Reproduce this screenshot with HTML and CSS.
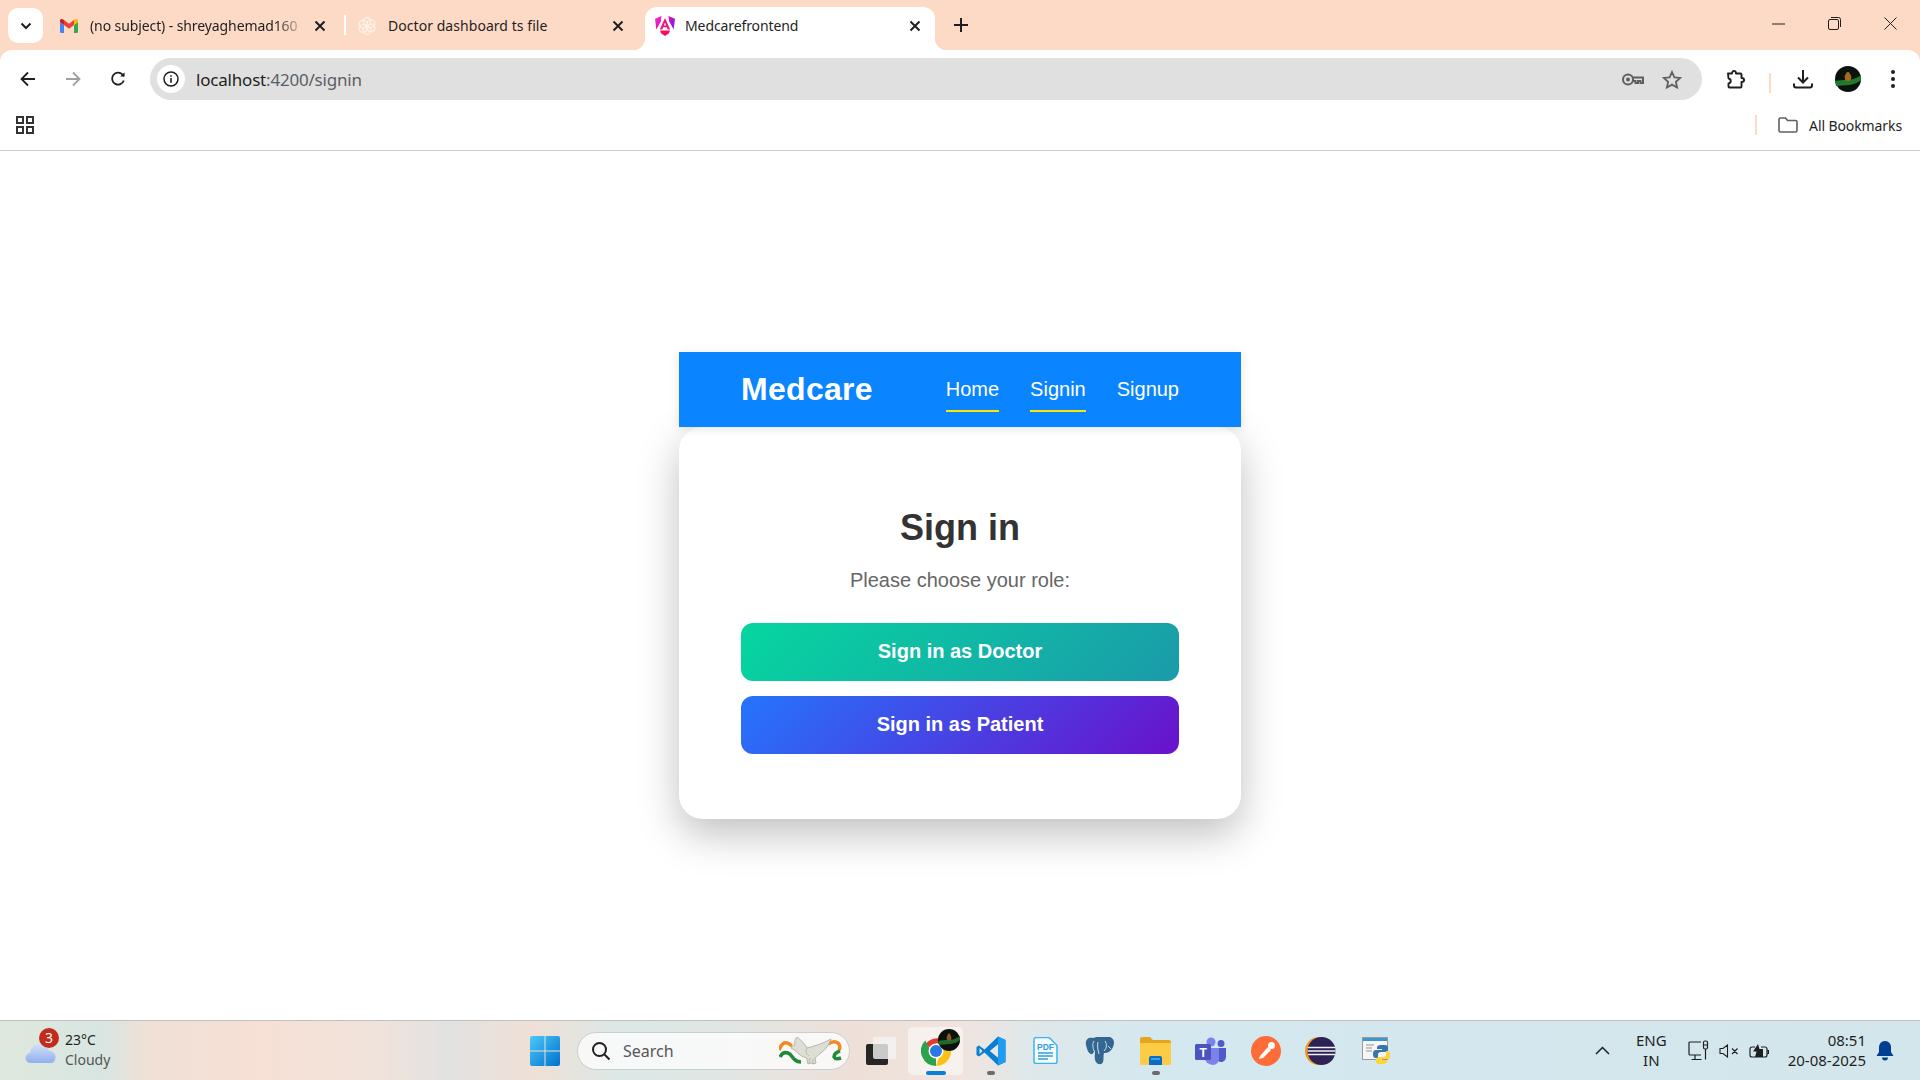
FILE: index.html
```html
<!doctype html>
<html lang="en">
<head>
    <meta charset="UTF-8">
    <title>Medcarefrontend</title>
    <link rel="stylesheet" href="styles.css">
</head>
<body>
    <div class="tabstrip">
        <div class="tabsearch">
            <svg width="12" height="8" viewBox="0 0 12 8"><path d="M1.500 1.500 6 6l4.500-4.500" fill="none" stroke="#1f1f1f" stroke-width="2"/></svg>
        </div>
        <div class="tab tab-first">
            <svg class="favicon" width="18" height="14" viewBox="0 0 18 14">
                <path d="M0 3v9.500A1.500 1.500 0 0 0 1.500 14H4V6z" fill="#4285f4"/>
                <path d="M14 6v8h2.500a1.500 1.500 0 0 0 1.500-1.500V3z" fill="#34a853"/>
                <path d="M0 3 4 6V1L2.600.3A1.700 1.700 0 0 0 0 2z" fill="#c5221f"/>
                <path d="M4 1v5l5 3.800L14 6V1L9 4.800z" fill="#ea4335"/>
                <path d="M14 1v5l4-3V2A1.700 1.700 0 0 0 15.400.3z" fill="#fbbc04"/>
            </svg>
            <span class="tab-title tab-title-fade">(no subject) - shreyaghemad160</span>
            <svg class="tab-close" width="12" height="12" viewBox="0 0 12 12"><path d="m1.500 1.500 9 9m0-9-9 9" stroke="#1f1f1f" stroke-width="2"/></svg>
        </div>
        <div class="tab-sep"></div>
        <div class="tab tab-second">
            <svg class="favicon" width="18" height="18" viewBox="0 0 18 18" fill="none" stroke="#fdf1e9" stroke-width="1.300">
                <circle cx="9" cy="4.500" r="3.800"/>
                <circle cx="5" cy="7" r="3.800"/>
                <circle cx="5" cy="11.500" r="3.800"/>
                <circle cx="9" cy="13.500" r="3.800"/>
                <circle cx="13" cy="11" r="3.800"/>
                <circle cx="13" cy="6.500" r="3.800"/>
            </svg>
            <span class="tab-title">Doctor dashboard ts file</span>
            <svg class="tab-close" width="12" height="12" viewBox="0 0 12 12"><path d="m1.500 1.500 9 9m0-9-9 9" stroke="#1f1f1f" stroke-width="2"/></svg>
        </div>
        <div class="tab tab-active">
            <svg class="favicon" width="20" height="20" viewBox="0 0 20 20">
                <defs><linearGradient id="ng" x1="0" y1="0" x2="1" y2="0.600"><stop offset="0" stop-color="#f637e3"/><stop offset="0.500" stop-color="#e40dab"/><stop offset="1" stop-color="#8a1bf2"/></linearGradient></defs>
                <path d="M6.500 0 0 2.800 1.300 13.500 5.800 5.500zM13.500 0 20 2.800 18.700 13.500 14.200 5.500z" fill="url(#ng)"/>
                <path d="M10 2 4.800 13.500h2.400l.9-2.200h3.800l.9 2.200h2.400zM10 6.500l1.100 3H8.900z" fill="#f0127e"/>
                <path d="M5 14.500h10l-1 2.800L10 20l-4-2.700z" fill="#fa0f55"/>
            </svg>
            <span class="tab-title">Medcarefrontend</span>
            <svg class="tab-close" width="12" height="12" viewBox="0 0 12 12"><path d="m1.500 1.500 9 9m0-9-9 9" stroke="#1f1f1f" stroke-width="2"/></svg>
        </div>
        <svg class="newtab" width="14" height="14" viewBox="0 0 14 14"><path d="M7 0v14M0 7h14" stroke="#1f1f1f" stroke-width="2"/></svg>
        <div class="winctl">
            <svg width="13" height="2" viewBox="0 0 13 2"><path d="M0 1h13" stroke="#1f1f1f"/></svg>
            <svg width="13" height="13" viewBox="0 0 13 13" fill="none" stroke="#1f1f1f"><rect x=".5" y="2.500" width="10" height="10" rx="1.500"/><path d="M3 .5h7.500a2 2 0 0 1 2 2V10"/></svg>
            <svg width="13" height="13" viewBox="0 0 13 13"><path d="m.5.5 12 12m0-12-12 12" stroke="#1f1f1f"/></svg>
        </div>
    </div>

    <div class="toolbar">
        <div class="toolbtn">
            <svg width="16" height="16" viewBox="0 0 16 16" fill="none" stroke="#1f1f1f" stroke-width="1.800"><path d="M15 8H2M8 1.500 1.500 8 8 14.500"/></svg>
        </div>
        <div class="toolbtn toolbtn-next">
            <svg width="16" height="16" viewBox="0 0 16 16" fill="none" stroke="#a0a0a0" stroke-width="1.800"><path d="M1 8h13M8 1.500 14.500 8 8 14.500"/></svg>
        </div>
        <div class="toolbtn toolbtn-next">
            <svg width="16" height="16" viewBox="0 0 16 16" fill="none" stroke="#1f1f1f" stroke-width="1.800"><path d="M13.800 9.500A6 6 0 1 1 12.500 3.500L14 5"/><path d="M14.500 1.200V5.500h-4.300z" fill="#1f1f1f" stroke="none"/></svg>
        </div>
        <div class="omnibox">
            <div class="siteinfo">
                <svg width="16" height="16" viewBox="0 0 16 16"><circle cx="8" cy="8" r="7" fill="none" stroke="#1f1f1f" stroke-width="1.500"/><path d="M7.200 7h1.600v4.700H7.200zM7.200 4.200h1.600v1.600H7.200z" fill="#1f1f1f"/></svg>
            </div>
            <span class="url">localhost<span class="url-dim">:4200/signin</span></span>
            <svg class="omni-key" width="22" height="13" viewBox="0 0 22 13" fill="none" stroke="#5f5f5f" stroke-width="2"><circle cx="6" cy="6.500" r="5"/><circle cx="6" cy="6.500" r="1" fill="#5f5f5f"/><path d="M11 4.500h10V10h-2.500V8H16v2h-2.500V8H11"/></svg>
            <svg class="omni-star" width="20" height="19" viewBox="0 0 20 19" fill="none" stroke="#5f5f5f" stroke-width="1.800"><path d="m10 2 2.400 5.300 5.800.6-4.300 3.900 1.200 5.700-5.100-2.900-5.100 2.900 1.200-5.700-4.300-3.900 5.800-.6z"/></svg>
        </div>
        <div class="toolbtn toolbtn-ext">
            <svg width="20" height="20" viewBox="0 0 20 20" fill="none" stroke="#1f1f1f" stroke-width="1.900"><path d="M2 4.500h4c0-3.500 4-3.500 4 0h4.500a1 1 0 0 1 1 1V9c3.500 0 3.500 4 0 4v4.500a1 1 0 0 1-1 1H3.500a1 1 0 0 1-1-1v-3c3-.5 3-4.500 0-5z" stroke-linejoin="round"/></svg>
        </div>
        <div class="tool-sep"></div>
        <div class="toolbtn">
            <svg width="20" height="20" viewBox="0 0 20 20" fill="none" stroke="#1f1f1f" stroke-width="2"><path d="M10 1v12M5 8.500l5 5 5-5"/><path d="M1 14.500v2a2 2 0 0 0 2 2h14a2 2 0 0 0 2-2v-2"/></svg>
        </div>
        <div class="toolbtn toolbtn-tight">
            <svg width="26" height="26" viewBox="0 0 26 26">
                <circle cx="13" cy="13" r="13" fill="#0b120c"/>
                <path d="M0 15c7-2 18 1 26-6v5c-6 6-17 5-25 6z" fill="#1f7a2e"/>
                <path d="M10 13c-1-3 0-4 1-5 0-2 3-3 4 0 1 1 2 3 1 5 0 1-1 2-3 2s-3-1-3-2z" fill="#a8691f"/>
            </svg>
        </div>
        <div class="toolbtn toolbtn-tight">
            <svg width="4" height="18" viewBox="0 0 4 18" fill="#1f1f1f"><circle cx="2" cy="2" r="2"/><circle cx="2" cy="9" r="2"/><circle cx="2" cy="16" r="2"/></svg>
        </div>
    </div>

    <div class="bookmarks">
        <svg width="18" height="18" viewBox="0 0 18 18" fill="none" stroke="#333" stroke-width="2"><rect x="1" y="1" width="6" height="6"/><rect x="11" y="1" width="6" height="6"/><rect x="1" y="11" width="6" height="6"/><rect x="11" y="11" width="6" height="6"/></svg>
        <div class="bm-sep"></div>
        <svg class="bm-folder" width="20" height="16" viewBox="0 0 20 16" fill="none" stroke="#5f5f5f" stroke-width="1.600"><path d="M1 2.500A1.500 1.500 0 0 1 2.500 1h5l2 2.500h8a1.500 1.500 0 0 1 1.500 1.500v8.500a1.500 1.500 0 0 1-1.500 1.500h-15A1.500 1.500 0 0 1 1 13.500z"/></svg>
        <span class="bm-label">All Bookmarks</span>
    </div>

    <main class="page">
        <nav class="navbar">
            <span class="brand">Medcare</span>
            <ul class="navlinks">
                <li class="navlink navlink-on">Home</li>
                <li class="navlink navlink-on">Signin</li>
                <li class="navlink">Signup</li>
            </ul>
        </nav>
        <section class="card">
            <h1 class="card-title">Sign in</h1>
            <p class="card-sub">Please choose your role:</p>
            <button class="rolebtn rolebtn-doctor">Sign in as Doctor</button>
            <button class="rolebtn rolebtn-patient">Sign in as Patient</button>
        </section>
    </main>

    <footer class="taskbar">
        <div class="weather">
            <div class="weather-icon">
                <svg width="32" height="22" viewBox="0 0 32 22">
                    <defs><linearGradient id="cl" x1="0" y1="0" x2="0" y2="1"><stop offset="0" stop-color="#d3e0fa"/><stop offset="1" stop-color="#8fb0ec"/></linearGradient></defs>
                    <path d="M6 21a5 5 0 0 1-1-10C6 5 11 1 16 2c4 1 7 3 8 7 4 0 7 3 6.500 7-.5 3-2 5-5 5z" fill="url(#cl)"/>
                </svg>
                <span class="weather-badge">3</span>
            </div>
            <div class="weather-text">
                <span class="weather-temp">23°C</span>
                <span class="weather-desc">Cloudy</span>
            </div>
        </div>

        <div class="taskapps">
            <div class="taskapp">
                <svg width="30" height="30" viewBox="0 0 30 30">
                    <defs><linearGradient id="win" x1="0" y1="0" x2="1" y2="1"><stop offset="0" stop-color="#4cc9f8"/><stop offset="1" stop-color="#0071cf"/></linearGradient></defs>
                    <path d="M0 2a2 2 0 0 1 2-2h12.500v14.500H0zM15.500 0H28a2 2 0 0 1 2 2v12.500H15.500zM0 15.500h14.500V30H2a2 2 0 0 1-2-2zM15.500 15.500H30V28a2 2 0 0 1-2 2H15.500z" fill="url(#win)"/>
                </svg>
            </div>
            <div class="tasksearch">
                <svg width="20" height="20" viewBox="0 0 20 20" fill="none" stroke="#1f1f1f" stroke-width="2"><circle cx="8.500" cy="8.500" r="6.500"/><path d="m13.500 13.500 5 5"/></svg>
                <span class="tasksearch-text">Search</span>
                <svg class="tasksearch-art" width="64" height="30" viewBox="0 0 64 30" fill="none">
                    <path d="M0 14c2-5 5-8 8-7 2 0 3 2 5 3" stroke="#f08a24" stroke-width="3.500"/>
                    <path d="M1 21c2-4 5-5 8-4 3 1 4 4 6 6 2 2 4 3 7 3" stroke="#1f8a37" stroke-width="3.500"/>
                    <path d="M49 8c3-2 7-3 10-1 2 2 2 5 1 7" stroke="#f08a24" stroke-width="3.500"/>
                    <path d="M61 15c-3 1-6 3-6 6 1 2 4 2 7 1" stroke="#1f8a37" stroke-width="3.500"/>
                    <path d="M12 12c2-2 3-3 4-3-1-3 0-6 2-8 4 3 8 7 10 11 8-2 17-5 24-9-2 6-5 10-9 13-2 2-5 4-7 6l1 5-3 1-2-1-3 1-1-3v-3c-5-1-9-4-11-7z" fill="#dedfd4" stroke="#a9a99c" stroke-width=".8"/>
                    <path d="M28 12c-2 3-1 6 2 8M30 27l1-5M34 28l0-5" stroke="#a9a99c" stroke-width=".7"/>
                </svg>
            </div>
            <div class="taskapp">
                <svg width="30" height="28" viewBox="0 0 30 28">
                    <rect x="0" y="7" width="22" height="21" rx="2" fill="#262626"/>
                    <rect x="7" y="0" width="23" height="22" rx="2" fill="#f4f4f4" fill-opacity=".8"/>
                </svg>
            </div>
            <div class="taskapp taskapp-open">
                <svg width="30" height="30" viewBox="0 0 30 30">
                    <path d="M15 15 4.200 8.600A15 15 0 0 1 28 7.500H15z" fill="#e33b2e"/>
                    <path d="M15 30A15 15 0 0 1 4.200 4.600L10 15l5 7.500z" fill="#2ba24c"/>
                    <path d="M15 30a15 15 0 0 0 13-22.500H15l5 8z" fill="#fbc117"/>
                    <circle cx="15" cy="15" r="7.500" fill="#fff"/>
                    <circle cx="15" cy="15" r="6" fill="#2a78e4"/>
                </svg>
                <svg class="taskapp-avatar" width="22" height="22" viewBox="0 0 22 22">
                    <circle cx="11" cy="11" r="11" fill="#0b120c"/>
                    <path d="M0 12c6-2 15 1 22-5v4c-5 5-14 4-21 5z" fill="#1f6a2a"/>
                    <path d="M9 11c-1-3 0-4 1-6 1-1 2-1 2 0 1 2 2 4 1 6-1 1-3 1-4 0z" fill="#8d5a1b"/>
                </svg>
                <span class="task-run task-run-on"></span>
            </div>
            <div class="taskapp">
                <svg width="30" height="30" viewBox="0 0 30 30">
                    <path fill-rule="evenodd" d="M22 .5 8.500 13.500 3 9.500.5 11v8L3 20.500l5.500-4L22 29.500l7.500-3.500V4zM22 8.500 14 15l8 6.500zM3.500 12v6l3-3z" fill="#0a7fd2"/>
                    <path d="M22 .5 29.500 4v22L22 29.500z" fill="#1f9cf0"/>
                    <path d="M22 8.500 14 15l8 6.500z" fill="#e9e7e4"/>
                </svg>
                <span class="task-run"></span>
            </div>
            <div class="taskapp">
                <svg width="25" height="27" viewBox="0 0 25 27">
                    <path d="M1 2.500a2 2 0 0 1 2-2h13l8 8V24.500a2 2 0 0 1-2 2H3a2 2 0 0 1-2-2z" fill="#f4fbff" stroke="#3fb4ea" stroke-width="1.500"/>
                    <text class="pdf-label" x="4" y="12.500">PDF</text>
                    <path d="M5 16h15M5 19h15M5 22h10" stroke="#2f9fdd" stroke-width="1.500"/>
                </svg>
            </div>
            <div class="taskapp">
                <svg width="31" height="28" viewBox="0 0 31 28">
                    <path d="M8 1C3 0 0 3 1 8c1 4 2 8 5 9 2 1 3-3 4-4 0 4-1 9 1 12 2 3 6 3 7 0 1-3 0-6 1-9 3 0 7-1 9-6 2-5 1-8-3-10-3-1-5 0-7 0-3-1-7 0-10 1z" fill="#336791"/>
                    <path d="M9 4c-2 3-1 7 0 10M20 4c2 3 2 7-1 10M13 5c-1 4 0 8 1 12M23 9l3 3" fill="none" stroke="#dfeaf2" stroke-width=".9"/>
                </svg>
            </div>
            <div class="taskapp">
                <svg width="31" height="28" viewBox="0 0 31 28">
                    <path d="M0 2a2 2 0 0 1 2-2h8l3 3h16a2 2 0 0 1 2 2v4H0z" fill="#e5a51e"/>
                    <path d="M0 6h31v21a1 1 0 0 1-1 1H1a1 1 0 0 1-1-1z" fill="#fdcb45"/>
                    <path d="M9 21a2 2 0 0 1 2-2h9a2 2 0 0 1 2 2v7H9z" fill="#0a6ec4"/>
                    <path d="M11 22h9" stroke="#59b0ec" stroke-width="1.500"/>
                </svg>
                <span class="task-run"></span>
            </div>
            <div class="taskapp">
                <svg width="31" height="28" viewBox="0 0 31 28">
                    <circle cx="16" cy="5" r="4.500" fill="#7b83eb"/>
                    <circle cx="26" cy="6.500" r="3.500" fill="#5059c9"/>
                    <path d="M22 11h9v9a5 5 0 0 1-8 4z" fill="#5059c9"/>
                    <path d="M9 11h15v11a6 6 0 0 1-6 6 9 9 0 0 1-9-9z" fill="#7b83eb"/>
                    <rect x="0" y="7" width="16" height="16" rx="1.500" fill="#4b53bc"/>
                    <text class="teams-label" x="4.500" y="20">T</text>
                </svg>
            </div>
            <div class="taskapp">
                <svg width="30" height="30" viewBox="0 0 30 30">
                    <circle cx="15" cy="15" r="15" fill="#ff6c37"/>
                    <path d="M9 20 17 11l3 3-8 8-4 1z" fill="#fff"/>
                    <circle cx="20.500" cy="9.500" r="3.500" fill="#fff"/>
                </svg>
            </div>
            <div class="taskapp">
                <svg width="31" height="28" viewBox="0 0 31 28">
                    <circle cx="14" cy="14" r="14" fill="#f7941e"/>
                    <circle cx="16.500" cy="14" r="14" fill="#2c2255"/>
                    <path d="M2.500 10.500h28M2.500 14h28M3 17.500h27" stroke="#f1f0f6" stroke-width="1.500"/>
                </svg>
            </div>
            <div class="taskapp">
                <svg width="28" height="28" viewBox="0 0 28 28">
                    <rect x=".5" y=".5" width="25" height="22" fill="#f6f6f6" stroke="#9a9a9a"/>
                    <rect x="1" y="1" width="24" height="3" fill="#3f95d0"/>
                    <path d="M4 8h8M4 11h6M4 14h6" stroke="#b5b5b5" stroke-width="1.300"/>
                    <path d="M20 8c-4 0-5 1-5 3v1h5v1h-6c-2 0-3 1-3 4s1 4 3 4h2v-3c0-2 1-3 3-3h4c2 0 3-1 3-2v-3c0-2-3-2-6-2z" fill="#3776ab"/>
                    <path d="M20 27c4 0 5-1 5-3v-1h-5v-1h6c2 0 2-1 2-4s-1-4-2-4h-2v3c0 2-1 3-3 3h-4c-2 0-3 1-3 2v3c0 2 3 2 6 2z" fill="#ffd43b"/>
                </svg>
            </div>
        </div>

        <div class="tray">
            <svg class="tray-chevron" width="15" height="9" viewBox="0 0 15 9" fill="none" stroke="#1f1f1f" stroke-width="1.500"><path d="m1 8 6.500-6.500L14 8"/></svg>
            <div class="tray-lang">
                <span>ENG</span>
                <span>IN</span>
            </div>
            <div class="tray-status">
                <svg width="21" height="21" viewBox="0 0 21 21" fill="none" stroke="#1f1f1f" stroke-width="1.200"><path d="M13 2H2a1 1 0 0 0-1 1v11a1 1 0 0 0 1 1h11M7 15v4M3.500 19.500h10"/><rect x="15.500" y="1" width="4" height="8" rx="1.500"/><path d="M17.500 9v10.500M15.500 5h4"/></svg>
                <svg width="20" height="14" viewBox="0 0 20 14" fill="none" stroke="#1f1f1f" stroke-width="1.100"><path d="M1 4.500h3L8.500 1v12L4 9.500H1zM13 4.500l5.500 5.500M18.500 4.500 13 10"/></svg>
                <svg width="20" height="16" viewBox="0 0 20 16" fill="none" stroke="#1f1f1f" stroke-width="1.200"><path d="M6 4H3a2 2 0 0 0-2 2v6a2 2 0 0 0 2 2h13a2 2 0 0 0 2-2V6a2 2 0 0 0-2-2h-4M18 7.500h1.500v3H18"/><path d="M9 1 4 8.500h3.500L6 14h8V6h-3.500z" fill="#1f1f1f" stroke="none"/></svg>
            </div>
            <div class="tray-clock">
                <span>08:51</span>
                <span>20-08-2025</span>
            </div>
            <svg class="tray-bell" width="18" height="20" viewBox="0 0 18 20" fill="#003e92"><path d="M9 0C5 0 3 3 3 6.500V11L.5 15h17L15 11V6.500C15 3 13 0 9 0zM6 16.500a3 3 0 0 0 6 0z"/></svg>
        </div>
    </footer>
</body>
</html>
```

FILE: styles.css
```css
*{
    margin: 0;
    padding: 0;
    box-sizing: border-box;
}
ul{
    list-style: none;
}
svg{
    display: block;
    flex: none;
}
body{
    height: 100vh;
    display: flex;
    flex-direction: column;
    overflow: hidden;
    background: #fddac6;
    font-family: "Noto Sans", "Liberation Sans", sans-serif;
    color: #1f1f1f;
}

/* tabs */
.tabstrip{
    height: 50px;
    display: flex;
    align-items: flex-start;
    padding: 7px 0 0 8px;
}
.tabsearch{
    width: 35px;
    height: 35px;
    margin-top: 1px;
    background: #fff;
    border-radius: 10px;
    display: flex;
    align-items: center;
    justify-content: center;
}
.tab{
    height: 43px;
    display: flex;
    align-items: center;
    flex: none;
    position: relative;
    padding-bottom: 6px;
}
.tab-first{
    width: 284px;
    margin-left: 17px;
}
.tab-first .favicon{
    margin-right: 12px;
}
.tab-second{
    width: 299px;
    padding-left: 12px;
}
.tab-second .favicon{
    margin-right: 12px;
}
.tab-second .tab-title{
    letter-spacing: .05px;
}
.tab-sep{
    width: 2px;
    height: 20px;
    margin-top: 8px;
    background: #fff;
    flex: none;
}
.tab-title{
    flex: 1;
    min-width: 0;
    font-size: 14px;
    white-space: nowrap;
    overflow: hidden;
    letter-spacing: -.1px;
}
.tab-title-fade{
    -webkit-mask-image: linear-gradient(90deg, #000 86%, transparent 100%);
    mask-image: linear-gradient(90deg, #000 86%, transparent 100%);
}
.tab-close{
    margin: 0 14px;
}
.tab-first .tab-close{
    margin: 0 18px 0 8px;
}
.tab-second .tab-close{
    margin-right: 21px;
}
.tab-active{
    width: 290px;
    padding-left: 10px;
    background: #fff;
    border-radius: 12px 12px 0 0;
}
.tab-active .favicon{
    margin-right: 10px;
}
.tab-active::before,
.tab-active::after{
    content: "";
    position: absolute;
    bottom: 0;
    width: 12px;
    height: 12px;
}
.tab-active::before{
    left: -12px;
    background: radial-gradient(circle at 0 0, transparent 12px, #fff 12.500px);
}
.tab-active::after{
    right: -12px;
    background: radial-gradient(circle at 100% 0, transparent 12px, #fff 12.500px);
}
.newtab{
    margin: 11px 0 0 19px;
}
.winctl{
    margin-left: auto;
    display: flex;
    align-items: center;
    gap: 43px;
    padding: 10px 23px 0 0;
}

/* toolbar */
.toolbar{
    height: 58px;
    padding: 8px 9px 0 10px;
    background: #fff;
    border-radius: 12px 12px 0 0;
    display: flex;
    align-items: flex-start;
}
.toolbtn{
    width: 36px;
    height: 42px;
    display: flex;
    align-items: center;
    justify-content: center;
    flex: none;
}
.toolbtn-next{
    margin-left: 9px;
}
.toolbtn-tight{
    margin-left: 9px;
}
.toolbtn-ext{
    margin-left: 16px;
}
.omnibox{
    flex: 1;
    height: 42px;
    margin-left: 14px;
    padding: 0 16px 0 7px;
    background: #e0e0e0;
    border-radius: 21px;
    display: flex;
    align-items: center;
}
.siteinfo{
    width: 28px;
    height: 28px;
    background: #fff;
    border-radius: 50%;
    display: flex;
    align-items: center;
    justify-content: center;
}
.url{
    margin-left: 11px;
    font-size: 17px;
    letter-spacing: -.2px;
    color: #1f1f1f;
}
.url-dim{
    color: #5b5e66;
}
.omni-key{
    margin-left: auto;
}
.omni-star{
    margin: 0 4px 0 18px;
}
.tool-sep{
    width: 2px;
    height: 20px;
    margin: 0 14px 0 15px;
    align-self: center;
    background: #fddac6;
}

/* bookmarks */
.bookmarks{
    height: 43px;
    padding: 0 18px 8px 16px;
    background: #fff;
    border-bottom: 1px solid #cfcfcf;
    display: flex;
    align-items: center;
}
.bm-sep{
    width: 2px;
    height: 20px;
    margin-left: auto;
    background: #fddac6;
}
.bm-folder{
    margin: 0 11px 0 21px;
}
.bm-label{
    font-size: 14px;
    letter-spacing: -.1px;
}

/* page */
.page{
    flex: 1;
    background: #fff;
    padding-top: 201px;
    display: flex;
    flex-direction: column;
    align-items: center;
    font-family: "Liberation Sans", Arial, sans-serif;
}
.navbar{
    width: 562px;
    height: 75px;
    padding: 0 62px;
    background: #0a84ff;
    color: #fff;
    display: flex;
    align-items: center;
    justify-content: space-between;
    position: relative;
    z-index: 1;
    box-shadow: 0 2px 10px rgba(0,0,0,.1);
}
.brand{
    font-size: 32px;
    font-weight: bold;
    letter-spacing: .3px;
}
.navlinks{
    display: flex;
    gap: 31px;
}
.navlink{
    font-size: 20px;
    padding: 7px 0 9px;
    border-bottom: 2px solid transparent;
    margin-top: 3px;
}
.navlink-on{
    border-bottom-color: #ffe600;
}
.card{
    width: 562px;
    height: 392px;
    padding: 75px 62px 0;
    background: #fff;
    border-radius: 24px;
    box-shadow: 0 15px 40px rgba(0,0,0,.25);
    text-align: center;
}
.card-title{
    font-size: 36px;
    line-height: 52px;
    color: #333;
}
.card-sub{
    margin-top: 12px;
    margin-bottom: 29px;
    font-size: 20px;
    line-height: 28px;
    color: #666;
}
.rolebtn{
    display: block;
    width: 100%;
    height: 58px;
    padding-bottom: 2px;
    border: 0;
    border-radius: 12px;
    color: #fff;
    font-family: inherit;
    font-size: 20px;
    font-weight: bold;
}
.rolebtn-doctor{
    background: linear-gradient(135deg, #06d6a0, #1b9aaa);
}
.rolebtn-patient{
    margin-top: 15px;
    background: linear-gradient(135deg, #2575fc, #6a11cb);
}

/* taskbar */
.taskbar{
    height: 60px;
    border-top: 1px solid #c0c0bc;
    background: linear-gradient(90deg, #dfe8dd 0, #d8e6e2 100px, #f0e0d6 150px, #f7e0d5 260px, #f0e3db 380px, #e2e2e2 450px, #efe0d6 530px, #dce8e6 620px, #e0e6e4 720px, #eee0d9 850px, #f0e4de 960px, #dfe8ea 1030px, #d4e8ef 1150px, #d3e6ec 1920px);
    display: flex;
    align-items: center;
}
.weather{
    width: 517px;
    padding-left: 25px;
    display: flex;
    align-items: center;
    flex: none;
}
.weather-icon{
    width: 40px;
    padding-top: 4px;
    position: relative;
}
.weather-badge{
    position: absolute;
    left: 14px;
    top: -10px;
    width: 20px;
    height: 20px;
    border-radius: 50%;
    background: #c42b1c;
    color: #fff;
    font-size: 14px;
    line-height: 20px;
    text-align: center;
}
.weather-text{
    display: flex;
    flex-direction: column;
    padding-bottom: 2px;
    font-size: 14px;
    line-height: 20px;
}
.weather-desc{
    color: #555;
}
.taskapps{
    display: flex;
    align-items: center;
}
.taskapp{
    width: 55px;
    height: 48px;
    display: flex;
    align-items: center;
    justify-content: center;
    position: relative;
}
.taskapp-open{
    background: rgba(255,255,255,.5);
    border-radius: 5px;
}
.taskapp-avatar{
    position: absolute;
    top: 2px;
    right: 3px;
}
.task-run{
    position: absolute;
    left: 50%;
    bottom: 0;
    width: 8px;
    height: 4px;
    margin-left: -4px;
    background: #6b6b6b;
    border-radius: 2px;
}
.task-run-on{
    width: 20px;
    margin-left: -10px;
    background: #0a7fd8;
}
.tasksearch{
    width: 273px;
    height: 38px;
    margin: 0 3px 0 5px;
    padding: 0 6px 0 13px;
    background: rgba(255,255,255,.75);
    border: 1px solid #c8d0d0;
    border-radius: 19px;
    display: flex;
    align-items: center;
}
.tasksearch-text{
    margin-left: 12px;
    font-size: 16px;
    color: #555;
}
.tasksearch-art{
    margin-left: auto;
}
.pdf-label{
    font-family: "Liberation Sans", sans-serif;
    font-size: 8.500px;
    font-weight: bold;
    fill: #2f9fdd;
}
.teams-label{
    font-family: "Liberation Sans", sans-serif;
    font-size: 12px;
    font-weight: bold;
    fill: #fff;
}
.tray{
    margin-left: auto;
    padding-right: 26px;
    display: flex;
    align-items: center;
}
.tray-chevron{
    margin-right: 26px;
}
.tray-lang{
    display: flex;
    flex-direction: column;
    align-items: center;
    padding-bottom: 2px;
    font-size: 15px;
    line-height: 20px;
}
.tray-status{
    margin-left: 21px;
    display: flex;
    align-items: center;
    gap: 10px;
}
.tray-clock{
    margin-left: 19px;
    display: flex;
    flex-direction: column;
    align-items: flex-end;
    padding-bottom: 2px;
    font-size: 15px;
    line-height: 20px;
}
.tray-bell{
    margin-left: 10px;
}
```
